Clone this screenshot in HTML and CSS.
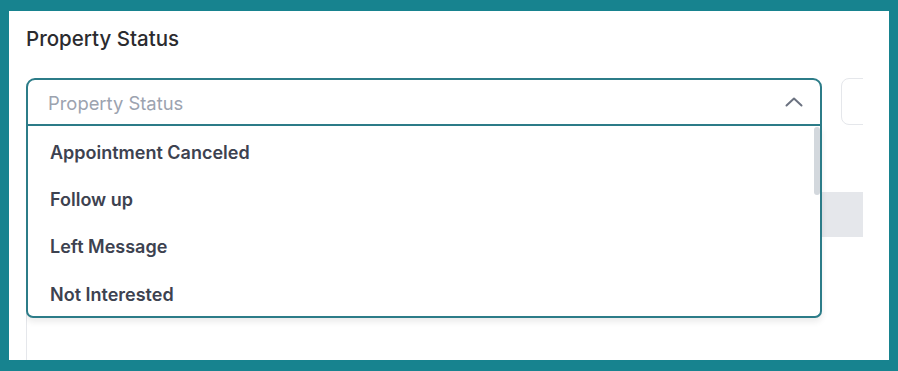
FILE: index.html
```html
<!DOCTYPE html>
<html lang="en">
<head>
<meta charset="utf-8">
<title>Property Status</title>
<link rel="stylesheet" href="styles.css">
</head>
<body>
<div class="panel">
  <div class="content">
    <h2 class="title">Property Status</h2>
    <div class="filters">
      <div class="select">
        <div class="select-head">
          <span class="placeholder">Property Status</span>
          <svg class="chevron" width="18" height="10" viewBox="0 0 18 10" fill="none" aria-hidden="true">
            <path d="M1.5 8.5L9 1.5L16.5 8.5" stroke="#6b7280" stroke-width="2" stroke-linecap="round" stroke-linejoin="round"/>
          </svg>
        </div>
        <div class="options">
          <ul class="option-list">
            <li class="option">Appointment Canceled</li>
            <li class="option">Follow up</li>
            <li class="option">Left Message</li>
            <li class="option">Not Interested</li>
          </ul>
          <div class="scroll-thumb"></div>
        </div>
      </div>
      <div class="other-input"></div>
    </div>
    <div class="table">
      <div class="table-head"></div>
    </div>
  </div>
</div>
</body>
</html>
```

FILE: styles.css
```css
html, body {
  margin: 0;
  padding: 0;
}
body {
  background: #17838f;
  font-family: Inter, "Noto Sans", sans-serif;
  padding: 11px 9px 11px 9px;
}
.panel {
  background: #ffffff;
  width: 880px;
  height: 349px;
  overflow: hidden;
  padding-left: 17px;
  box-sizing: border-box;
}
.content {
  width: 837px;
  height: 100%;
  overflow: hidden;
  position: relative;
}
.title {
  margin: 0;
  padding-top: 16px;
  font-size: 20.5px;
  line-height: 24px;
  font-weight: 500;
  color: #2b2b2f;
}
.filters {
  display: flex;
  gap: 19px;
  margin-top: 27px;
}
.select {
  position: relative;
  width: 796px;
  flex: none;
  z-index: 2;
}
.select-head {
  height: 48px;
  box-sizing: border-box;
  border: 2px solid #2c7c88;
  border-radius: 9px 9px 0 0;
  display: flex;
  align-items: center;
  justify-content: space-between;
  padding: 0 17px 0 20px;
  background: #fff;
}
.placeholder {
  font-size: 18.4px;
  color: #9ca3af;
  padding-top: 1px;
}
.chevron {
  display: block;
}
.options {
  position: absolute;
  top: 48px;
  left: 0;
  right: 0;
  height: 192px;
  box-sizing: border-box;
  background: #fff;
  border: 2px solid #2c7c88;
  border-top: none;
  border-radius: 0 0 7px 7px;
  box-shadow: 0 4px 6px rgba(0, 0, 0, 0.08);
  overflow: hidden;
}
.option-list {
  margin: 0;
  padding: 3px 0 0 0;
  list-style: none;
}
.scroll-thumb {
  position: absolute;
  top: 1px;
  right: 0;
  width: 6px;
  height: 68px;
  border-radius: 3px;
  background: #d3d8dd;
}
.option {
  height: 47px;
  display: flex;
  align-items: center;
  padding-left: 22px;
  font-size: 18px;
  font-weight: 600;
  color: #3d4250;
}
.option:last-child {
  padding-top: 2px;
  box-sizing: border-box;
}
.other-input {
  width: 200px;
  height: 47px;
  flex: none;
  box-sizing: border-box;
  border: 1px solid #e5e7eb;
  border-radius: 8px;
}
.table {
  margin-top: 66px;
  height: 200px;
  border-left: 1px solid #e5e7eb;
}
.table-head {
  height: 45px;
  background: #e5e7eb;
}
```
